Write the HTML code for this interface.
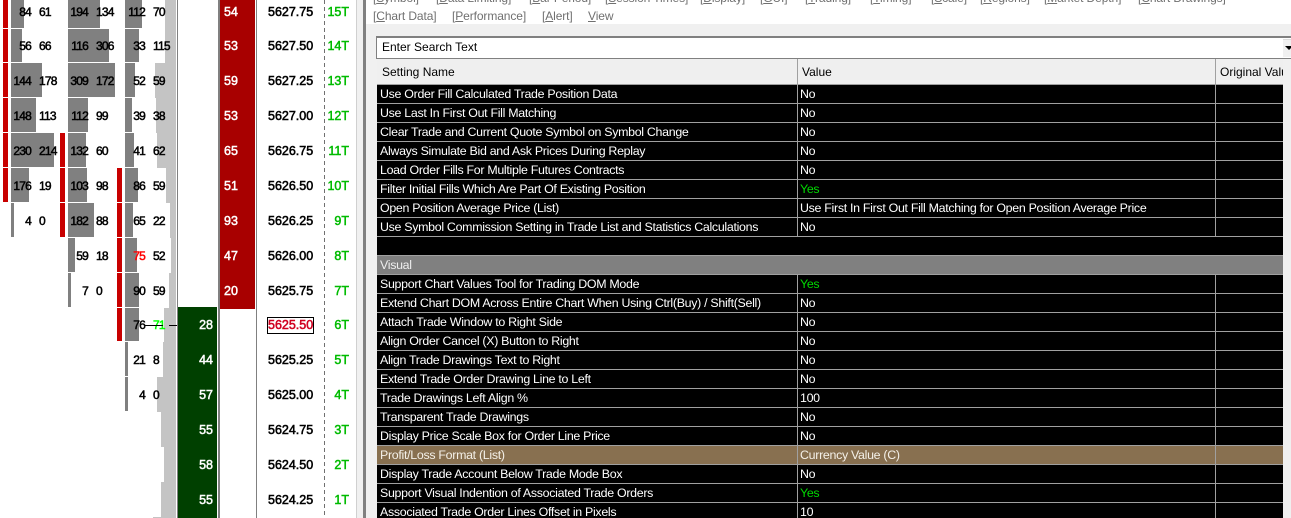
<!DOCTYPE html>
<html><head><meta charset="utf-8"><style>
html,body{margin:0;padding:0;background:#fff;overflow:hidden}
#p{position:relative;width:1291px;height:518px;overflow:hidden;background:#fff;font-family:"Liberation Sans",sans-serif}
#p div,#p span.x{position:absolute}
.t{white-space:nowrap;line-height:14px;font-size:12px}
.n,.m,.v,.q,.d,.e{position:absolute;white-space:nowrap;line-height:14px}
.n,.m{font-size:12px;color:#000;letter-spacing:-.8px;font-weight:normal;-webkit-text-stroke:.5px currentColor}
.n{width:40px;text-align:right}
.v{font-size:12.5px;color:#fff;font-weight:normal;-webkit-text-stroke:.5px currentColor}
.v.b{left:173px;width:40px;text-align:right}
.v.a{left:224px}
.q{left:268px;font-size:12.5px;color:#000;font-weight:normal;-webkit-text-stroke:.55px currentColor}
.d{left:309px;width:40px;text-align:right;font-size:12.5px;color:#0b0;font-weight:normal;-webkit-text-stroke:.5px currentColor}
.y0{top:5px}.y1{top:39px}.y2{top:74px}.y3{top:109px}.y4{top:144px}.y5{top:179px}.y6{top:214px}.y7{top:249px}.y8{top:284px}.y9{top:318px}.y10{top:353px}.y11{top:388px}.y12{top:423px}.y13{top:458px}.y14{top:493px}
.h0{top:-7px;height:35px}.h1{top:29px;height:33px}.h2{top:63px;height:34px}.h3{top:98px;height:34px}.h4{top:133px;height:34px}.h5{top:168px;height:34px}.h6{top:203px;height:34px}.h7{top:238px;height:34px}.h8{top:273px;height:34px}.h9{top:308px;height:33px}.h10{top:342px;height:34px}.h11{top:377px;height:34px}
.r{background:#c80000;width:5px}
.g{background:#808080}
.f{background:#c4c4c4;height:35px}
.w{left:377px;height:18px;width:906px;color:#fff;font-size:12.4px;line-height:18px;letter-spacing:-.3px}
.w i{position:absolute;top:0;height:18px;background:#000;font-style:normal;white-space:nowrap;overflow:hidden;box-sizing:border-box}
.w i.a{left:0;width:420px;padding-left:3px}
.w i.b{left:421px;width:417px;padding-left:2px}
.w i.c{left:839px;width:67px}
.w.u i{background:#887050;color:#f4f0e8}
.w.l{height:15px}
.w.l i{height:15px}
.w i.y{color:#00d800}
.w i.o{left:0;width:906px;padding-left:3px}
.w i.o.vis{background:#808080;color:#eee}
u{text-decoration:underline}
.mn{color:#707070;letter-spacing:-.1px}
</style></head><body><div id="p">

<!-- profile -->
<div class="f" style="left:165px;top:0;height:28px;width:11px"></div>
<div class="f" style="left:165px;top:28px;width:11px"></div>
<div class="f" style="left:155px;top:63px;width:21px"></div>
<div class="f" style="left:156px;top:98px;width:20px"></div>
<div class="f" style="left:157px;top:133px;width:19px"></div>
<div class="f" style="left:166px;top:168px;width:10px"></div>
<div class="f" style="left:170px;top:203px;width:6px"></div>
<div class="f" style="left:171px;top:238px;width:5px"></div>
<div class="f" style="left:169px;top:273px;width:7px"></div>
<div class="f" style="left:164px;top:308px;width:12px"></div>
<div class="f" style="left:163px;top:342px;width:13px"></div>
<div class="f" style="left:157px;top:377px;width:19px"></div>
<div class="f" style="left:161px;top:412px;width:15px"></div>
<div class="f" style="left:164px;top:447px;width:12px"></div>
<div class="f" style="left:161px;top:482px;width:15px"></div>
<div class="f" style="left:153px;top:517px;height:1px;width:23px"></div>

<!-- red bars -->
<div class="r h0" style="left:3px"></div><div class="r h1" style="left:3px"></div><div class="r h2" style="left:3px"></div><div class="r h3" style="left:3px"></div><div class="r h4" style="left:3px"></div><div class="r h5" style="left:3px"></div>
<div class="r h4" style="left:60px"></div><div class="r h5" style="left:60px"></div><div class="r h6" style="left:60px"></div>
<div class="r h5" style="left:117px"></div><div class="r h6" style="left:117px"></div><div class="r h7" style="left:117px"></div><div class="r h8" style="left:117px"></div><div class="r h9" style="left:117px"></div>

<!-- gray bars col1 -->
<div class="g h0" style="left:11px;width:13px"></div><div class="g h1" style="left:11px;width:11px"></div><div class="g h2" style="left:11px;width:31px"></div><div class="g h3" style="left:11px;width:25px"></div><div class="g h4" style="left:11px;width:43px"></div><div class="g h5" style="left:11px;width:18px"></div><div class="g h6" style="left:11px;width:3px"></div>
<!-- col2 -->
<div class="g h0" style="left:68px;width:32px"></div><div class="g h1" style="left:68px;width:41px"></div><div class="g h2" style="left:68px;width:47px"></div><div class="g h3" style="left:68px;width:20px"></div><div class="g h4" style="left:68px;width:18px"></div><div class="g h5" style="left:68px;width:19px"></div><div class="g h6" style="left:68px;width:26px"></div><div class="g h7" style="left:68px;width:7px"></div><div class="g h8" style="left:68px;width:3px"></div>
<!-- col3 -->
<div class="g h0" style="left:125px;width:17px"></div><div class="g h1" style="left:125px;width:14px"></div><div class="g h2" style="left:125px;width:10px"></div><div class="g h3" style="left:125px;width:7px"></div><div class="g h4" style="left:125px;width:9px"></div><div class="g h5" style="left:125px;width:13px"></div><div class="g h6" style="left:125px;width:8px"></div><div class="g h7" style="left:125px;width:12px"></div><div class="g h8" style="left:125px;width:14px"></div><div class="g h9" style="left:125px;width:14px"></div><div class="g h10" style="left:125px;width:3px"></div><div class="g h11" style="left:125px;width:3px"></div>

<!-- numbers -->
<span class="n y0" style="left:-9px">84</span><span class="m y0" style="left:39px">61</span><span class="n y0" style="left:48px">194</span><span class="m y0" style="left:96px">134</span><span class="n y0" style="left:105px">112</span><span class="m y0" style="left:153px">70</span>
<span class="n y1" style="left:-9px">56</span><span class="m y1" style="left:39px">66</span><span class="n y1" style="left:48px">116</span><span class="m y1" style="left:96px">306</span><span class="n y1" style="left:105px">33</span><span class="m y1" style="left:153px">115</span>
<span class="n y2" style="left:-9px">144</span><span class="m y2" style="left:39px">178</span><span class="n y2" style="left:48px">309</span><span class="m y2" style="left:96px">172</span><span class="n y2" style="left:105px">52</span><span class="m y2" style="left:153px">59</span>
<span class="n y3" style="left:-9px">148</span><span class="m y3" style="left:39px">113</span><span class="n y3" style="left:48px">112</span><span class="m y3" style="left:96px">99</span><span class="n y3" style="left:105px">39</span><span class="m y3" style="left:153px">38</span>
<span class="n y4" style="left:-9px">230</span><span class="m y4" style="left:39px">214</span><span class="n y4" style="left:48px">132</span><span class="m y4" style="left:96px">60</span><span class="n y4" style="left:105px">41</span><span class="m y4" style="left:153px">62</span>
<span class="n y5" style="left:-9px">176</span><span class="m y5" style="left:39px">19</span><span class="n y5" style="left:48px">103</span><span class="m y5" style="left:96px">98</span><span class="n y5" style="left:105px">86</span><span class="m y5" style="left:153px">59</span>
<span class="n y6" style="left:-9px">4</span><span class="m y6" style="left:39px">0</span><span class="n y6" style="left:48px">182</span><span class="m y6" style="left:96px">88</span><span class="n y6" style="left:105px">65</span><span class="m y6" style="left:153px">22</span>
<span class="n y7" style="left:48px">59</span><span class="m y7" style="left:96px">18</span><span class="n y7" style="left:105px;color:#f00">75</span><span class="m y7" style="left:153px">52</span>
<span class="n y8" style="left:48px">7</span><span class="m y8" style="left:96px">0</span><span class="n y8" style="left:105px">90</span><span class="m y8" style="left:153px">59</span>
<span class="n y9" style="left:105px">76</span><span class="m y9" style="left:153px;color:#0f0">71</span>
<span class="n y10" style="left:105px">21</span><span class="m y10" style="left:153px">8</span>
<span class="n y11" style="left:105px">4</span><span class="m y11" style="left:153px">0</span>
<div style="left:145px;top:325px;width:18px;height:1px;background:#000"></div>
<div style="left:169px;top:325px;width:8px;height:1px;background:#000"></div>

<!-- DOM columns -->
<div style="left:177px;top:0;width:1px;height:518px;background:#808080"></div>
<div style="left:178px;top:307px;width:39px;height:211px;background:#004000"></div>
<div style="left:218px;top:0;width:2px;height:518px;background:#808080"></div>
<div style="left:220px;top:0;width:35px;height:309px;background:#a80000"></div>
<div style="left:256px;top:0;width:1px;height:518px;background:#808080"></div>
<span class="v a y0">54</span><span class="v a y1">53</span><span class="v a y2">59</span><span class="v a y3">53</span><span class="v a y4">65</span><span class="v a y5">51</span><span class="v a y6">93</span><span class="v a y7">47</span><span class="v a y8">20</span>
<span class="v b y9">28</span><span class="v b y10">44</span><span class="v b y11">57</span><span class="v b y12">55</span><span class="v b y13">58</span><span class="v b y14">55</span>

<span class="q y0">5627.75</span><span class="q y1">5627.50</span><span class="q y2">5627.25</span><span class="q y3">5627.00</span><span class="q y4">5626.75</span><span class="q y5">5626.50</span><span class="q y6">5626.25</span><span class="q y7">5626.00</span><span class="q y8">5625.75</span>
<div style="left:267px;top:317px;width:45px;height:15px;border:1px solid #000"></div>
<span class="q y9" style="color:#d00020">5625.50</span>
<span class="q y10">5625.25</span><span class="q y11">5625.00</span><span class="q y12">5624.75</span><span class="q y13">5624.50</span><span class="q y14">5624.25</span>

<div style="left:324px;top:0;width:1px;height:518px;background:repeating-linear-gradient(to bottom,#707070 0,#707070 4px,#fff 4px,#fff 7px)"></div>
<span class="d y0">15T</span><span class="d y1">14T</span><span class="d y2">13T</span><span class="d y3">12T</span><span class="d y4">11T</span><span class="d y5">10T</span><span class="d y6">9T</span><span class="d y7">8T</span><span class="d y8">7T</span><span class="d y9">6T</span><span class="d y10">5T</span><span class="d y11">4T</span><span class="d y12">3T</span><span class="d y13">2T</span><span class="d y14">1T</span>

<!-- separator -->
<div style="left:356px;top:0;width:1px;height:518px;background:#d0d0d0"></div>
<div style="left:357px;top:0;width:6px;height:518px;background:#f0f0f0"></div>
<div style="left:363px;top:0;width:3px;height:518px;background:#808080"></div>

<!-- panel -->
<div style="left:366px;top:0;width:925px;height:24px;background:#fff"></div>
<div style="left:366px;top:24px;width:925px;height:494px;background:#f0f0f0"></div>

<div class="t mn" style="left:373px;top:-9px">[<u>S</u>ymbol]</div>
<div class="t mn" style="left:436px;top:-9px">[<u>D</u>ata Limiting]</div>
<div class="t mn" style="left:529px;top:-9px">[<u>B</u>ar Period]</div>
<div class="t mn" style="left:605px;top:-9px">[<u>S</u>ession Times]</div>
<div class="t mn" style="left:700px;top:-9px">[<u>D</u>isplay]</div>
<div class="t mn" style="left:760px;top:-9px">[<u>G</u>UI]</div>
<div class="t mn" style="left:805px;top:-9px">[<u>T</u>rading]</div>
<div class="t mn" style="left:870px;top:-9px">[<u>T</u>iming]</div>
<div class="t mn" style="left:931px;top:-9px">[<u>S</u>cale]</div>
<div class="t mn" style="left:980px;top:-9px">[<u>R</u>egions]</div>
<div class="t mn" style="left:1044px;top:-9px">[<u>M</u>arket Depth]</div>
<div class="t mn" style="left:1138px;top:-9px">[<u>C</u>hart Drawings]</div>
<div class="t mn" style="left:373px;top:9px">[<u>C</u>hart Data]</div>
<div class="t mn" style="left:452px;top:9px">[<u>P</u>erformance]</div>
<div class="t mn" style="left:542px;top:9px">[<u>A</u>lert]</div>
<div class="t mn" style="left:588px;top:9px"><u>V</u>iew</div>

<!-- search -->
<div style="left:376px;top:36px;width:915px;height:23px;background:#808080"></div>
<div style="left:377px;top:38px;width:914px;height:20px;background:#fff"></div>
<div class="t" style="left:382px;top:40px;color:#000">Enter Search Text</div>
<div style="left:1283px;top:39px;width:8px;height:17px;background:#f0f0f0;border-top:1px solid #ddd"></div>
<div style="left:1285px;top:46px;width:0;height:0;border-left:4px solid transparent;border-right:4px solid transparent;border-top:4px solid #000"></div>

<!-- header -->
<div style="left:376px;top:59px;width:907px;height:25px;background:#efefef"></div>
<div style="left:376px;top:59px;width:1px;height:459px;background:#f0f0f0"></div>
<div style="left:377px;top:84px;width:906px;height:434px;background:#a0a0a0"></div>
<div style="left:797px;top:59px;width:1px;height:25px;background:#a0a0a0"></div>
<div style="left:1215px;top:59px;width:1px;height:25px;background:#a0a0a0"></div>
<div class="t" style="left:382px;top:65px;color:#000">Setting Name</div>
<div class="t" style="left:802px;top:65px;color:#000">Value</div>
<div style="left:1216px;top:59px;width:67px;height:25px;overflow:hidden"><div class="t" style="left:4px;top:6px;color:#000">Original Value</div></div>

<!-- rows -->
<div class="w" style="top:85px"><i class="a">Use Order Fill Calculated Trade Position Data</i><i class="b">No</i><i class="c"></i></div>
<div class="w" style="top:104px"><i class="a">Use Last In First Out Fill Matching</i><i class="b">No</i><i class="c"></i></div>
<div class="w" style="top:123px"><i class="a">Clear Trade and Current Quote Symbol on Symbol Change</i><i class="b">No</i><i class="c"></i></div>
<div class="w" style="top:142px"><i class="a">Always Simulate Bid and Ask Prices During Replay</i><i class="b">No</i><i class="c"></i></div>
<div class="w" style="top:161px"><i class="a">Load Order Fills For Multiple Futures Contracts</i><i class="b">No</i><i class="c"></i></div>
<div class="w" style="top:180px"><i class="a">Filter Initial Fills Which Are Part Of Existing Position</i><i class="b y">Yes</i><i class="c"></i></div>
<div class="w" style="top:199px"><i class="a">Open Position Average Price (List)</i><i class="b">Use First In First Out Fill Matching for Open Position Average Price</i><i class="c"></i></div>
<div class="w" style="top:218px"><i class="a">Use Symbol Commission Setting in Trade List and Statistics Calculations</i><i class="b">No</i><i class="c"></i></div>
<div class="w" style="top:237px"><i class="o"></i></div>
<div class="w" style="top:256px"><i class="o vis">Visual</i></div>
<div class="w" style="top:275px"><i class="a">Support Chart Values Tool for Trading DOM Mode</i><i class="b y">Yes</i><i class="c"></i></div>
<div class="w" style="top:294px"><i class="a">Extend Chart DOM Across Entire Chart When Using Ctrl(Buy) / Shift(Sell)</i><i class="b">No</i><i class="c"></i></div>
<div class="w" style="top:313px"><i class="a">Attach Trade Window to Right Side</i><i class="b">No</i><i class="c"></i></div>
<div class="w" style="top:332px"><i class="a">Align Order Cancel (X) Button to Right</i><i class="b">No</i><i class="c"></i></div>
<div class="w" style="top:351px"><i class="a">Align Trade Drawings Text to Right</i><i class="b">No</i><i class="c"></i></div>
<div class="w" style="top:370px"><i class="a">Extend Trade Order Drawing Line to Left</i><i class="b">No</i><i class="c"></i></div>
<div class="w" style="top:389px"><i class="a">Trade Drawings Left Align %</i><i class="b">100</i><i class="c"></i></div>
<div class="w" style="top:408px"><i class="a">Transparent Trade Drawings</i><i class="b">No</i><i class="c"></i></div>
<div class="w" style="top:427px"><i class="a">Display Price Scale Box for Order Line Price</i><i class="b">No</i><i class="c"></i></div>
<div class="w u" style="top:446px"><i class="a">Profit/Loss Format (List)</i><i class="b">Currency Value (C)</i><i class="c"></i></div>
<div class="w" style="top:465px"><i class="a">Display Trade Account Below Trade Mode Box</i><i class="b">No</i><i class="c"></i></div>
<div class="w" style="top:484px"><i class="a">Support Visual Indention of Associated Trade Orders</i><i class="b y">Yes</i><i class="c"></i></div>
<div class="w l" style="top:503px"><i class="a">Associated Trade Order Lines Offset in Pixels</i><i class="b">10</i><i class="c"></i></div>

</div></body></html>
